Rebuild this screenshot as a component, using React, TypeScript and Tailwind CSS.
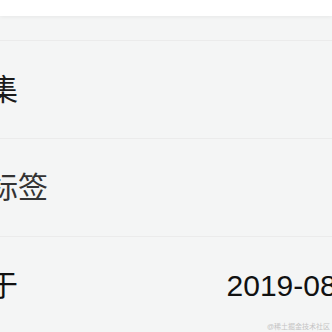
const rows = [
  { label: '收藏集', value: '', color: 'text-[#1a1a1a]' },
  { label: '关注标签', value: '', color: 'text-[#333333]' },
  { label: '加入于', value: '2019-08-15', color: 'text-[#111111]' },
]

export default function App() {
  return (
    <div
      className="relative h-[332px] w-[332px] overflow-hidden bg-[#f4f5f5]"
      style={{ fontFamily: '"Liberation Sans", "Noto Sans CJK SC", sans-serif' }}
    >
      {/* header bar */}
      <div className="relative z-10 h-4 bg-white shadow-[0_1px_4px_rgba(0,0,0,0.06)]" />
      <div className="h-[25px] border-b border-[#ebebeb]" />

      {/* list, shifted left like the cropped page */}
      <div className="-ml-[88px] w-[484px]">
        {rows.map((r) => (
          <div
            key={r.label}
            className="flex h-[98px] items-center justify-between border-b border-[#ebebeb] px-4"
          >
            <span className={`text-[30px] leading-none ${r.color}`}>{r.label}</span>
            {r.value && <span className="text-[30px] leading-none text-[#111111]">{r.value}</span>}
          </div>
        ))}
      </div>

      {/* watermark */}
      <div className="absolute bottom-[2px] right-[2px] text-[7px] leading-none text-[#c4c4c4]">
        @稀土掘金技术社区
      </div>
    </div>
  )
}
